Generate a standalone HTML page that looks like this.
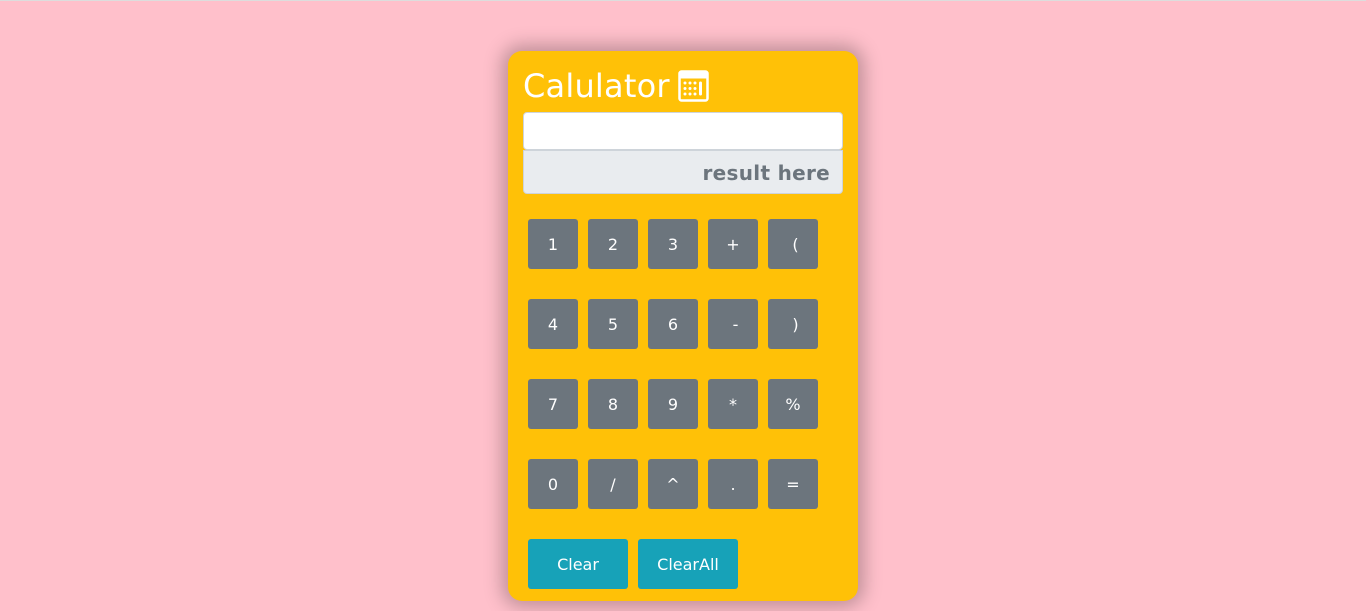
<!DOCTYPE html>
<html><head><meta charset="utf-8"><style>
html,body{margin:0;height:611px;background:#ffc0cb;font-family:"DejaVu Sans","Liberation Sans",sans-serif;overflow:hidden}
body{border-top:1px solid #ddd;box-sizing:border-box}
.card{position:absolute;left:508px;top:51px;width:350px;height:550px;background:#ffc107;border-radius:14px;box-shadow:0 0 18px 6px rgba(0,0,0,.25)}
.t{position:absolute;left:15px;top:15px;color:#fff;font-size:32px;line-height:40px;white-space:nowrap;letter-spacing:0.2px}
.ic{position:absolute;left:170px;top:19px}
.in{position:absolute;left:15px;top:61px;width:318px;height:36px;background:#fff;border:1px solid #ced4da;border-radius:4px}
.res{position:absolute;left:15px;top:99px;width:318px;height:42px;background:#e9ecef;border:1px solid #ced4da;border-radius:0 0 4px 4px;color:#6c757d;font-weight:bold;font-size:20px;line-height:44px;text-align:right;letter-spacing:0.3px}
.res span{padding-right:12px}
.b{position:absolute;width:50px;height:50px;background:#6c757d;border-radius:3px;color:#fff;font-size:16px;line-height:52px;text-align:center}
.c{position:absolute;width:100px;height:50px;background:#17a2b8;border-radius:3px;color:#fff;font-size:16px;line-height:52px;text-align:center;top:488px}
</style></head><body>
<div class="card">
<div class="t">Calulator</div>
<svg class="ic" width="31" height="32" viewBox="0 0 31 32"><rect x="1.5" y="1.5" width="28" height="29" rx="2" fill="none" stroke="#fff" stroke-width="2.5"/><rect x="1.5" y="1.5" width="28" height="7" fill="#fff"/><g fill="#fff"><circle cx="7" cy="13" r="1.5"/><circle cx="12" cy="13" r="1.5"/><circle cx="17" cy="13" r="1.5"/><circle cx="7" cy="18.5" r="1.5"/><circle cx="12" cy="18.5" r="1.5"/><circle cx="17" cy="18.5" r="1.5"/><circle cx="7" cy="24" r="1.5"/><circle cx="12" cy="24" r="1.5"/><circle cx="17" cy="24" r="1.5"/><rect x="21" y="11.5" width="3" height="14" rx="1.5"/></g></svg>
<div class="in"></div>
<div class="res"><span>result here</span></div>
<div class="b" style="left:20px;top:168px">1</div><div class="b" style="left:80px;top:168px">2</div><div class="b" style="left:140px;top:168px">3</div><div class="b" style="left:200px;top:168px">+</div><div class="b" style="left:260px;top:168px">&nbsp;(</div>
<div class="b" style="left:20px;top:248px">4</div><div class="b" style="left:80px;top:248px">5</div><div class="b" style="left:140px;top:248px">6</div><div class="b" style="left:200px;top:248px">&nbsp;-</div><div class="b" style="left:260px;top:248px">&nbsp;)</div>
<div class="b" style="left:20px;top:328px">7</div><div class="b" style="left:80px;top:328px">8</div><div class="b" style="left:140px;top:328px">9</div><div class="b" style="left:200px;top:328px">*</div><div class="b" style="left:260px;top:328px">%</div>
<div class="b" style="left:20px;top:408px">0</div><div class="b" style="left:80px;top:408px">/</div><div class="b" style="left:140px;top:408px">^</div><div class="b" style="left:200px;top:408px">.</div><div class="b" style="left:260px;top:408px">=</div>
<div class="c" style="left:20px">Clear</div><div class="c" style="left:130px">ClearAll</div>
</div>
</body></html>
